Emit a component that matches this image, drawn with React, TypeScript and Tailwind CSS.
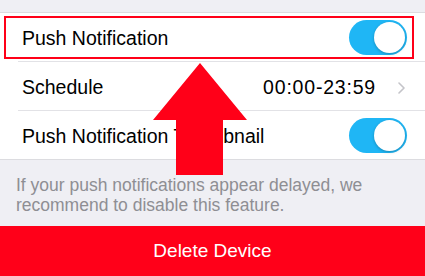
export default function App() {
  return (
    <div className="relative w-[425px] h-[276px] overflow-hidden bg-[#efeff4] font-['Liberation_Sans',Arial,sans-serif]">
      <div className="h-[12px]" />

      {/* settings list */}
      <div className="bg-white border-y border-[#dcdce0]">
        <div className="pl-[18px]">
          <div className="h-[49px] flex items-center justify-between border-b border-[#e2e2e6] pl-[4px] pr-[18px]">
            <span className="mt-[4px] text-[19.5px] text-black">Push Notification</span>
            <Toggle />
          </div>
        </div>
        <div className="pl-[18px]">
          <div className="h-[49px] flex items-center justify-between border-b border-[#e2e2e6] pl-[4px] pr-[20px]">
            <span className="mt-[4px] text-[19.5px] text-black">Schedule</span>
            <div className="mt-[4px] flex items-center gap-[22px]">
              <span className="text-[19.5px] text-black tracking-[0.8px]">00:00-23:59</span>
              <svg width="7" height="12" viewBox="0 0 7 12" fill="none">
                <path d="M1 1l5 5-5 5" stroke="#c4c4c9" strokeWidth="1.6" strokeLinecap="round" strokeLinejoin="round" />
              </svg>
            </div>
          </div>
        </div>
        <div className="pl-[18px]">
          <div className="h-[48px] flex items-center justify-between pl-[4px] pr-[18px]">
            <span className="mt-[4px] text-[19.5px] text-black">Push Notification Thumbnail</span>
            <Toggle />
          </div>
        </div>
      </div>

      <p className="px-[16px] pt-[15px] pb-[11px] text-[17.5px] leading-[20px] text-[#8e8e93]">
        If your push notifications appear delayed, we recommend to disable this feature.
      </p>

      <button className="w-full h-[50px] bg-[#ff0019] text-white text-[19px]">Delete Device</button>

      {/* annotation overlay */}
      <div className="absolute left-[4px] top-[16px] w-[410px] h-[43px] border-2 border-[#ff0018]" />
      <svg className="absolute left-0 top-0" width="425" height="276" viewBox="0 0 425 276">
        <polygon points="200,63 247,120 223,120 223,175 176,175 176,120 153,120" fill="#ff0018" />
      </svg>
    </div>
  );
}

function Toggle() {
  return (
    <div className="w-[58px] h-[35px] rounded-full bg-[#1fb6f5] flex items-center justify-end pr-[2px]">
      <div className="w-[31px] h-[31px] rounded-full bg-white shadow-[0_1px_3px_rgba(0,0,0,0.25)]" />
    </div>
  );
}
